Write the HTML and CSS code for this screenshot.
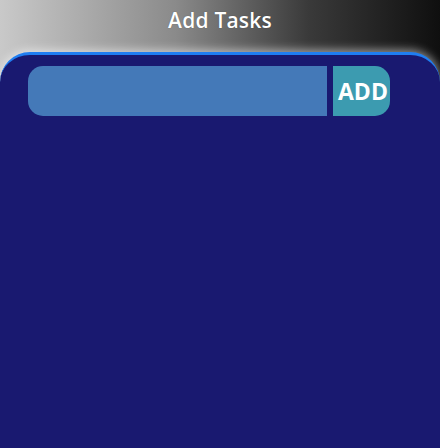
FILE: index.html
```html
<!DOCTYPE html>
<html lang="en">
<head>
<meta charset="utf-8">
<title>Add Tasks</title>
<link rel="stylesheet" href="styles.css">
</head>
<body>
<header class="top">
  <h1 class="title">Add Tasks</h1>
</header>
<main class="panel">
  <form class="add-form">
    <input class="task-input" type="text" aria-label="Task">
    <button class="add-btn" type="button">ADD</button>
  </form>
</main>
</body>
</html>
```
FILE: styles.css
```css
html, body {
  margin: 0;
  height: 100%;
}
body {
  background: linear-gradient(to right, #c9c9c9 0%, #8a8a8a 40%, #3a3a3a 70%, #0f0f0f 100%);
  font-family: "Open Sans", "Noto Sans", sans-serif;
  display: flex;
  flex-direction: column;
  overflow: hidden;
}
.top {
  height: 52px;
  display: flex;
  justify-content: center;
  flex: none;
}
.title {
  margin: 0;
  padding-top: 5px;
  font-size: 21px;
  font-weight: 600;
  color: #fff;
  line-height: 30px;
  letter-spacing: 0.2px;
  text-shadow: 0 0 1px rgba(0,0,0,0.4);
}
.panel {
  flex: 1;
  background: #191970;
  border-top: 3px solid #1f7ef2;
  border-radius: 30px 30px 0 0;
  box-shadow: 0 -2px 10px rgba(255,255,255,0.55);
  padding: 11px 28px 0;
}
.add-form {
  display: flex;
  gap: 6px;
}
.task-input {
  width: 299px;
  height: 50px;
  box-sizing: border-box;
  border: none;
  margin: 0;
  background: #4479b8;
  border-radius: 15px 0 0 15px;
  outline: none;
}
.add-btn {
  width: 57px;
  height: 50px;
  border: none;
  margin: 0;
  padding: 0 0 0 5px;
  background: #3c9bb0;
  border-radius: 0 15px 15px 0;
  color: #fff;
  font-family: "Open Sans", "Noto Sans", sans-serif;
  font-weight: 700;
  font-size: 23px;
  text-align: left;
  white-space: nowrap;
  overflow: hidden;
}
```
